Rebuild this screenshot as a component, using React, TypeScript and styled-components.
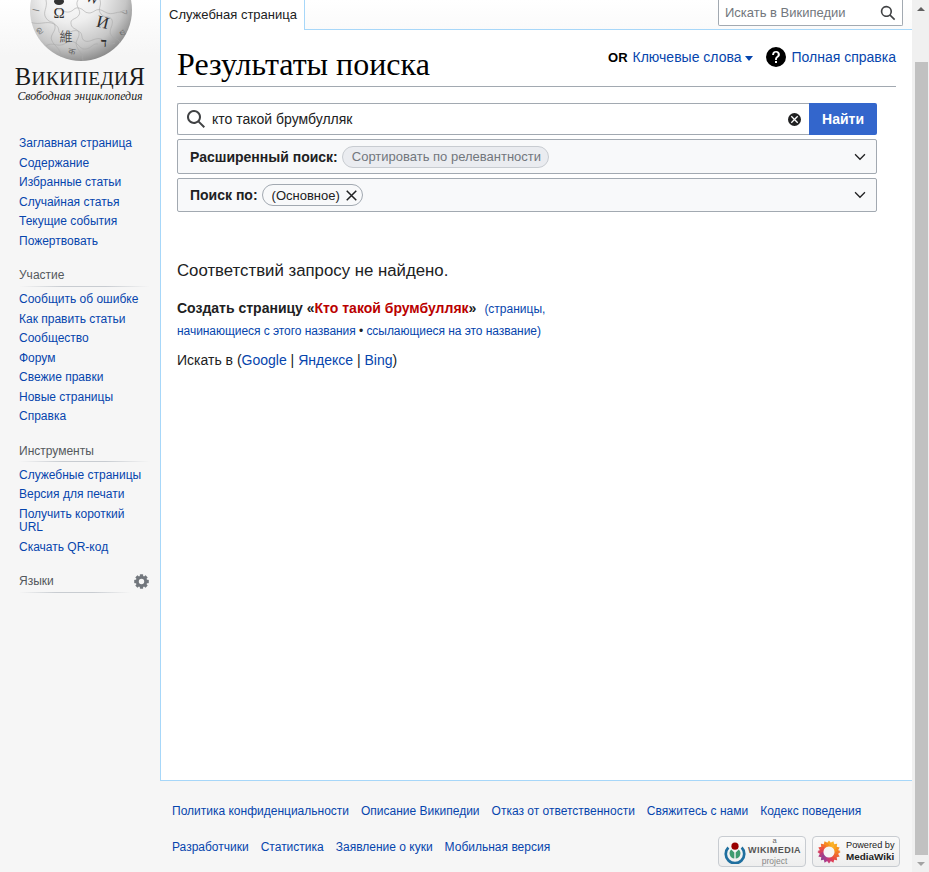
import React from 'react';
import styled, { createGlobalStyle } from 'styled-components';

const Global = createGlobalStyle`
  html, body { margin: 0; padding: 0; height: 100%; overflow: hidden; }
  body { font-family: "Liberation Sans", Arial, sans-serif; color: #202122; background: #f6f6f6; }
  a { color: #0645ad; text-decoration: none; }
`;

const Root = styled.div`
  display: flex; width: 929px; height: 872px; overflow: hidden;
  background: linear-gradient(#ffffff 0, #f6f6f6 56px);
`;
const Page = styled.div`display: flex; width: 912px; height: 872px;`;

const Sidebar = styled.aside`display: flex; flex-direction: column; width: 160px; flex: none;`;
const LogoBlock = styled.div`display: flex; flex-direction: column; align-items: center; height: 134px;`;
const Globe = styled.svg`display: block; width: 160px; height: 61px; flex: none;`;
const WordMark = styled.div`
  font-family: "Liberation Serif", serif; font-size: 24.6px; line-height: 26px; margin-top: 3px; color: #1a1a1a;
  letter-spacing: 0.25px; white-space: nowrap;
`;
const SmallCap = styled.span`font-size: 19.3px; letter-spacing: 0.5px;`;
const Motto = styled.div`
  font-family: "Liberation Serif", serif; font-style: italic; font-size: 11.9px; line-height: 13px; margin-top: -2px; color: #222; white-space: nowrap;
`;
const Portal = styled.nav`display: flex; flex-direction: column; padding: 0 10px 0 19px;`;
const PortalHead = styled.div<{ $narrow?: boolean }>`
  display: flex; justify-content: space-between; align-items: center;
  margin-top: 18px; margin-bottom: 3.5px; padding-bottom: 4px; height: 13.5px; box-sizing: content-box;
  font-size: 12px; line-height: 13.5px; color: #54595d;
  background: linear-gradient(to right, rgba(200,204,209,0) 0, #c8ccd1 33%, #c8ccd1 66%, rgba(200,204,209,0) 100%) left bottom / ${p => (p.$narrow ? '112px' : '131px')} 1px no-repeat;
`;
const NavList = styled.ul`list-style: none; margin: 0; padding: 0;`;
const NavItem = styled.li`font-size: 12px; line-height: 13.5px; padding: 3px 0;`;
const Gear = styled.svg`width: 15px; height: 15px; margin-right: 1px; flex: none;`;

const Column = styled.div`display: flex; flex-direction: column; flex: 1; min-width: 0;`;
const TopBar = styled.header`display: flex; justify-content: space-between; height: 29px; flex: none;`;
const Tab = styled.div`
  display: flex; align-items: center; height: 30px; box-sizing: border-box; margin-bottom: -1px; position: relative; z-index: 1;
  padding: 0 6px 2px 8px; background: #fff; font-size: 13px; color: #202122; white-space: nowrap;
  border-left: 1px solid #a7d7f9; border-right: 1px solid #a7d7f9; width: 145px;
`;
const TopSearch = styled.div`
  display: flex; align-items: center; justify-content: space-between; width: 185px; height: 26px; box-sizing: border-box;
  margin-right: 9px; padding: 0 6px 0 6px; background: #fff; border: 1px solid #a2a9b1; border-top: 0; border-radius: 0 0 2px 2px;
  font-size: 13px; color: #72777d;
`;
const Content = styled.main`
  flex: 1; min-height: 0; background: #fff; border: 1px solid #a7d7f9; border-right: 0; padding: 0 16px;
`;
const HeadingRow = styled.div`
  display: flex; justify-content: space-between; align-items: flex-start; padding-top: 16px; height: 40px; border-bottom: 1px solid #a2a9b1;
`;
const Title = styled.h1`
  margin: 0; font-family: "Liberation Serif", serif; font-weight: 400; font-size: 32px; line-height: 37px; color: #000; white-space: nowrap;
`;
const Tools = styled.div`display: flex; align-items: center; height: 22px; font-size: 14px; white-space: nowrap;`;
const OrMark = styled.b`color: #000; margin-right: 5px; font-size: 13px;`;
const Caret = styled.span`
  width: 0; height: 0; margin: 2px 13px 0 4px; border-left: 4px solid transparent; border-right: 4px solid transparent; border-top: 5px solid #0645ad;
`;
const HelpIcon = styled.svg`width: 20px; height: 20px; margin-right: 5px; flex: none;`;

const Form = styled.div`width: 700px; margin-top: 16px; display: flex; flex-direction: column; gap: 4px;`;
const SearchRow = styled.div`display: flex; height: 32px;`;
const SearchField = styled.div`
  flex: 1; display: flex; align-items: center; box-sizing: border-box; padding: 0 8px; background: #fff;
  border: 1px solid #a2a9b1; border-right: 0; border-radius: 2px 0 0 2px; font-size: 14px; color: #202122;
`;
const FieldIcon = styled.svg`width: 20px; height: 20px; flex: none; margin: 0 6px 0 0;`;
const FieldText = styled.span`flex: 1;`;
const ClearIcon = styled.svg`width: 13px; height: 13px; flex: none; margin: 1px 0 0 0;`;
const SubmitButton = styled.button`
  width: 68px; height: 32px; border: 0; border-radius: 0 2px 2px 0; background: #36c; color: #fff; font: bold 14px "Liberation Sans", Arial, sans-serif; padding: 0;
`;
const Panel = styled.div<{ $h: number }>`
  display: flex; align-items: center; height: ${p => p.$h}px; box-sizing: border-box; padding: 0 10px 0 12px;
  background: #f8f9fa; border: 1px solid #a2a9b1; border-radius: 2px; font-size: 14px;
`;
const PanelLabel = styled.b`color: #202122; margin-right: 4px; white-space: nowrap;`;
const Chip = styled.span<{ $muted?: boolean }>`
  display: inline-flex; align-items: center; height: 22px; box-sizing: border-box; border-radius: 11px; white-space: nowrap; font-size: 13px;
  padding: 0 ${p => (p.$muted ? '7px' : '3px')} 0 9px;
  background: ${p => (p.$muted ? '#eaecf0' : '#f8f9fa')};
  border: 1px solid ${p => (p.$muted ? '#c8ccd1' : '#a2a9b1')};
  color: ${p => (p.$muted ? '#72777d' : '#202122')};
`;
const ChipClose = styled.svg`width: 15px; height: 15px; margin-left: 4px; flex: none;`;
const Chevron = styled.svg`width: 12px; height: 12px; margin-left: auto; flex: none;`;

const NoResults = styled.p`margin: 50px 0 0; font-size: 16.8px; line-height: 18px; color: #202122;`;
const CreateLine = styled.p`margin: 17px 0 0; font-size: 12px; line-height: 22px; color: #202122;`;
const CreateStrong = styled.b`font-size: 14px;`;
const RedLink = styled.a`color: #ba0000;`;
const Gap = styled.span`margin-left: 8px;`;
const Tight = styled.span`letter-spacing: -0.05px;`;
const SearchElse = styled.p`margin: 7px 0 0; font-size: 14px; line-height: 22px; color: #202122;`;

const Footer = styled.footer`display: flex; flex-direction: column; height: 91px; flex: none; padding-left: 11px; box-sizing: border-box; margin-left: 1px;`;
const FootRow = styled.div<{ $top: number }>`display: flex; gap: 12px; font-size: 12px; line-height: 14px; margin-top: ${p => p.$top}px; white-space: nowrap; align-items: flex-start;`;
const Badges = styled.div`display: flex; gap: 6px; margin-left: auto; margin-right: 12px; margin-top: -4px;`;
const Badge = styled.div`
  display: flex; align-items: center; width: 88px; height: 31px; box-sizing: border-box; border: 1px solid #c8ccd1; border-radius: 4px;
  background: linear-gradient(#fafafa, #eeeeee); padding-left: 4px;
`;
const BadgeSvg = styled.svg`display: block; flex: none;`;
const BadgeStack = styled.div`display: flex; flex-direction: column; align-items: center; margin: -1px 0 0 1px;`;
const BadgeTiny = styled.span`font-size: 7.5px; line-height: 9px; color: #666;`;
const BadgeBold = styled.span`font-size: 9px; line-height: 10.5px; font-weight: bold; letter-spacing: 0.45px; color: #555;`;
const BadgeSmall = styled.span`font-size: 8.5px; line-height: 10px; color: #888;`;
const MwStack = styled.div`display: flex; flex-direction: column; margin-left: 5px; color: #222;`;
const MwTop = styled.span`font-size: 9.2px; line-height: 11px; white-space: nowrap;`;
const MwBottom = styled.span`font-size: 9.9px; line-height: 11.5px; font-weight: bold; white-space: nowrap;`;

const ScrollTrack = styled.div`
  display: flex; flex-direction: column; align-items: center; width: 17px; height: 872px; flex: none; background: #f0f0f0;
`;
const ScrollBtn = styled.div`display: flex; align-items: center; justify-content: center; height: 17px; width: 17px; flex: none;`;
const ScrollThumb = styled.div`width: 13px; height: 793px; margin-top: 45px; margin-left: 1px; background: #c1c1c1; flex: none;`;
const ArrowUp = styled.span`width: 0; height: 0; border-left: 4px solid transparent; border-right: 4px solid transparent; border-bottom: 4px solid #606060;`;
const ArrowDown = styled.span`width: 0; height: 0; border-left: 4px solid transparent; border-right: 4px solid transparent; border-top: 4px solid #a3a3a3;`;

const SEARCH = 'M12.2 13.6a7 7 0 1 1 1.4-1.4l5.4 5.4-1.4 1.4zM3 8a5 5 0 1 0 10 0A5 5 0 0 0 3 8';
const CLEAR = 'M10 0a10 10 0 1 0 10 10A10 10 0 0 0 10 0m5.66 14.24-1.41 1.41L10 11.41l-4.24 4.24-1.42-1.41L8.59 10 4.34 5.76l1.42-1.42L10 8.59l4.24-4.25 1.41 1.42L11.41 10z';
const CLOSE = 'm4.34 2.93 12.73 12.73-1.41 1.41L2.93 4.35zM17.07 4.34 4.34 17.07l-1.41-1.41L15.66 2.93z';
const CHEVRON = 'm17.5 4.75-7.5 7.5-7.5-7.5L1 6.25l9 9 9-9z';
const HELP = 'M10 0a10 10 0 1 0 10 10A10 10 0 0 0 10 0m1 16H9v-2h2zm2.71-7.6a2.64 2.64 0 0 1-.33.74 3.16 3.16 0 0 1-.48.55l-.54.48c-.21.18-.41.35-.58.52a2.54 2.54 0 0 0-.47.56A2.3 2.3 0 0 0 11 12a3.79 3.79 0 0 0-.11 1H9.08a8.9 8.9 0 0 1 .07-1.25 3.28 3.28 0 0 1 .25-.9 2.79 2.79 0 0 1 .41-.67 4 4 0 0 1 .58-.58c.17-.16.34-.3.51-.44a3 3 0 0 0 .43-.44 1.83 1.83 0 0 0 .3-.55 2 2 0 0 0 .11-.72 2.06 2.06 0 0 0-.17-.86 1.71 1.71 0 0 0-1-.9 1.7 1.7 0 0 0-.5-.1 1.77 1.77 0 0 0-1.53.68 3 3 0 0 0-.5 1.82H6.16a4.74 4.74 0 0 1 .28-1.68 3.56 3.56 0 0 1 .8-1.29 3.88 3.88 0 0 1 1.28-.83A4.59 4.59 0 0 1 10.18 4a4.44 4.44 0 0 1 1.44.23 3.51 3.51 0 0 1 1.15.65 3.08 3.08 0 0 1 .78 1.06 3.54 3.54 0 0 1 .29 1.45 3.39 3.39 0 0 1-.12 1.01z';

const GlobeLogo = () => (
  <Globe viewBox="0 0 160 61">
    <defs>
      <radialGradient id="gl" cx="0.4" cy="0.32" r="0.72">
        <stop offset="0" stopColor="#ffffff" />
        <stop offset="0.42" stopColor="#eeeeee" />
        <stop offset="0.76" stopColor="#c6c6c6" />
        <stop offset="1" stopColor="#858585" />
      </radialGradient>
      <clipPath id="gc"><circle cx="81" cy="10" r="51" /></clipPath>
    </defs>
    <circle cx="81" cy="10" r="51" fill="url(#gl)" />
    <g clipPath="url(#gc)" fill="none" stroke="#a9a9a9" strokeWidth="0.6">
      <path d="M30 22c10 4 16-2 24 2s2 9 8 10 10-5 16-3 2 8 7 10 10-4 16-2 6 7 14 4" />
      <path d="M46 0c2 8-4 12 0 18s8 2 9 8-6 9-3 15 8 6 9 16" />
      <path d="M78 0c-4 6 4 10 1 15s-9 3-8 9 7 4 8 9-5 8-2 14 6 7 6 14" />
      <path d="M100 0c2 6-3 9 1 14s9 1 11 6-4 10-1 15 8 3 9 8" />
      <path d="M56 10c6-2 8 3 13 2s5-5 10-4 5 5 10 5 7-5 12-3 7 5 14 3 8 0 13 2" />
      <path d="M46 46c5-4 10 0 15-1s8-5 13-3 6 8 12 7 7-6 12-5" />
    </g>
    <g clipPath="url(#gc)" fontFamily='"Liberation Serif", serif' fill="#2f2f2f">
      <text x="59" y="18" fontSize="15" textAnchor="middle">Ω</text>
      <text x="103" y="28" fontSize="17" textAnchor="middle" transform="rotate(14 103 22)">И</text>
      <text x="66" y="41" fontSize="13" textAnchor="middle" fontFamily='"Noto Sans CJK SC", sans-serif' fill="#555">維</text>
      <text x="104" y="47" fontSize="12" textAnchor="middle" fontWeight="bold">ד</text>
      <text x="92" y="3" fontSize="14" textAnchor="middle" transform="rotate(16 92 0)">W</text>
      <text x="36" y="13" fontSize="9" fill="#777" textAnchor="middle" transform="rotate(-78 36 10)">ا</text>
      <text x="38" y="33" fontSize="8" fill="#777" textAnchor="middle" transform="rotate(-40 38 30)">ഉ</text>
      <text x="126" y="16" fontSize="9" fill="#888" textAnchor="middle" transform="rotate(80 126 12)">ק</text>
      <text x="124" y="36" fontSize="8" fill="#666" textAnchor="middle" transform="rotate(60 124 32)">ש</text>
      <text x="72" y="55" fontSize="9" fill="#666" textAnchor="middle" transform="rotate(8 72 52)">क</text>
    </g>
    <ellipse cx="59" cy="1.5" rx="5" ry="3.5" fill="#333" />
  </Globe>
);

const GearIcon = () => (
  <Gear viewBox="0 0 20 20">
    <circle cx="10" cy="10" r="5.6" fill="none" stroke="#72777d" strokeWidth="4" />
    <g fill="#72777d">
      {[0, 45, 90, 135, 180, 225, 270, 315].map(a => (
        <rect key={a} x="7.8" y="0.3" width="4.4" height="4.5" rx="0.6" transform={`rotate(${a} 10 10)`} />
      ))}
    </g>
  </Gear>
);

const WikimediaMark = () => (
  <BadgeSvg width="24" height="24" viewBox="0 0 24 24">
    <path d="M4.4 6.6A10.6 10.6 0 1 0 19.6 6.6L17.7 8.5A7.9 7.9 0 1 1 6.3 8.5z" fill="#1f6f9f" />
    <path d="M11.3 18.6A5.4 5.4 0 0 1 8.2 9.4L11.3 12.6zM12.7 18.6A5.4 5.4 0 0 0 15.8 9.4L12.7 12.6z" fill="#3f9c70" />
    <circle cx="12" cy="6.2" r="3.6" fill="#990000" />
  </BadgeSvg>
);

const petals = Array.from({ length: 16 }, (_, i) => i * 22.5);
const PETAL_COLORS = ['#f9a51f', '#fab32a', '#f9a51f', '#f7931e', '#f47c26', '#ef6531', '#e9503f', '#dd4157', '#c93b76', '#a83d8c', '#93408f', '#b03c80', '#d43f63', '#ea5045', '#f36a30', '#f78c22'];

const MediaWikiMark = () => (
  <BadgeSvg width="24" height="24" viewBox="-13 -13 26 26">
    {petals.map((a, i) => (
      <path key={a} d="M-3 -7 Q-2.2 -10.5 0 -12.5 Q2.2 -10.5 3 -7 Z" fill={PETAL_COLORS[i]} transform={`rotate(${a})`} />
    ))}
    {petals.map((a, i) => (
      <path key={a} d="M-2.6 -5.5 L0 -9.6 L2.6 -5.5 Z" fill={PETAL_COLORS[i]} transform={`rotate(${a + 11.25})`} />
    ))}
    <circle r="6" fill="#f5f5f5" />
  </BadgeSvg>
);

const section = (items: React.ReactNode[]) => (
  <NavList>
    {items.map((t, i) => (
      <NavItem key={i}><a href="#">{t}</a></NavItem>
    ))}
  </NavList>
);

export default function App() {
  return (
    <Root>
      <Global />
      <Page>
        <Sidebar>
          <LogoBlock>
            <GlobeLogo />
            <WordMark>В<SmallCap>ИКИПЕДИ</SmallCap>Я</WordMark>
            <Motto>Свободная энциклопедия</Motto>
          </LogoBlock>
          <Portal>
            {section(['Заглавная страница', 'Содержание', 'Избранные статьи', 'Случайная статья', 'Текущие события', 'Пожертвовать'])}
            <PortalHead>Участие</PortalHead>
            {section(['Сообщить об ошибке', 'Как править статьи', 'Сообщество', 'Форум', 'Свежие правки', 'Новые страницы', 'Справка'])}
            <PortalHead>Инструменты</PortalHead>
            {section(['Служебные страницы', 'Версия для печати', <>Получить короткий<br />URL</>, 'Скачать QR-код'])}
            <PortalHead $narrow>Языки<GearIcon /></PortalHead>
          </Portal>
        </Sidebar>
        <Column>
          <TopBar>
            <Tab>Служебная страница</Tab>
            <TopSearch>
              Искать в Википедии
              <svg width="16" height="16" viewBox="0 0 20 20" fill="#404244"><path d={SEARCH} /></svg>
            </TopSearch>
          </TopBar>
          <Content>
            <HeadingRow>
              <Title>Результаты поиска</Title>
              <Tools>
                <OrMark>OR</OrMark>
                <a href="#">Ключевые слова</a>
                <Caret />
                <HelpIcon viewBox="0 0 20 20" fill="#000"><path d={HELP} /></HelpIcon>
                <a href="#">Полная справка</a>
              </Tools>
            </HeadingRow>
            <Form>
              <SearchRow>
                <SearchField>
                  <FieldIcon viewBox="0 0 20 20" fill="#404244"><path d={SEARCH} /></FieldIcon>
                  <FieldText>кто такой брумбулляк</FieldText>
                  <ClearIcon viewBox="0 0 20 20" fill="#202122"><path d={CLEAR} /></ClearIcon>
                </SearchField>
                <SubmitButton>Найти</SubmitButton>
              </SearchRow>
              <Panel $h={35}>
                <PanelLabel>Расширенный поиск:</PanelLabel>
                <Chip $muted>Сортировать по релевантности</Chip>
                <Chevron viewBox="0 0 20 20" fill="#202122"><path d={CHEVRON} /></Chevron>
              </Panel>
              <Panel $h={34}>
                <PanelLabel>Поиск по:</PanelLabel>
                <Chip>(Основное)<ChipClose viewBox="0 0 20 20" fill="#202122"><path d={CLOSE} /></ChipClose></Chip>
                <Chevron viewBox="0 0 20 20" fill="#202122"><path d={CHEVRON} /></Chevron>
              </Panel>
            </Form>
            <NoResults>Соответствий запросу не найдено.</NoResults>
            <CreateLine>
              <CreateStrong>Создать страницу «<RedLink href="#">Кто такой брумбулляк</RedLink>»</CreateStrong>
              <Gap><a href="#">(страницы,</a></Gap>
              <br />
              <Tight><a href="#">начинающиеся с этого названия</a> • <a href="#">ссылающиеся на это название</a><a href="#">)</a></Tight>
            </CreateLine>
            <SearchElse>Искать в (<a href="#">Google</a> | <a href="#">Яндексе</a> | <a href="#">Bing</a>)</SearchElse>
          </Content>
          <Footer>
            <FootRow $top={23}>
              <a href="#">Политика конфиденциальности</a>
              <a href="#">Описание Википедии</a>
              <a href="#">Отказ от ответственности</a>
              <a href="#">Свяжитесь с нами</a>
              <a href="#">Кодекс поведения</a>
            </FootRow>
            <FootRow $top={22}>
              <a href="#">Разработчики</a>
              <a href="#">Статистика</a>
              <a href="#">Заявление о куки</a>
              <a href="#">Мобильная версия</a>
              <Badges>
                <Badge>
                  <WikimediaMark />
                  <BadgeStack>
                    <BadgeTiny>a</BadgeTiny>
                    <BadgeBold>WIKIMEDIA</BadgeBold>
                    <BadgeSmall>project</BadgeSmall>
                  </BadgeStack>
                </Badge>
                <Badge>
                  <MediaWikiMark />
                  <MwStack>
                    <MwTop>Powered by</MwTop>
                    <MwBottom>MediaWiki</MwBottom>
                  </MwStack>
                </Badge>
              </Badges>
            </FootRow>
          </Footer>
        </Column>
      </Page>
      <ScrollTrack>
        <ScrollBtn><ArrowUp /></ScrollBtn>
        <ScrollThumb />
        <ScrollBtn><ArrowDown /></ScrollBtn>
      </ScrollTrack>
    </Root>
  );
}
